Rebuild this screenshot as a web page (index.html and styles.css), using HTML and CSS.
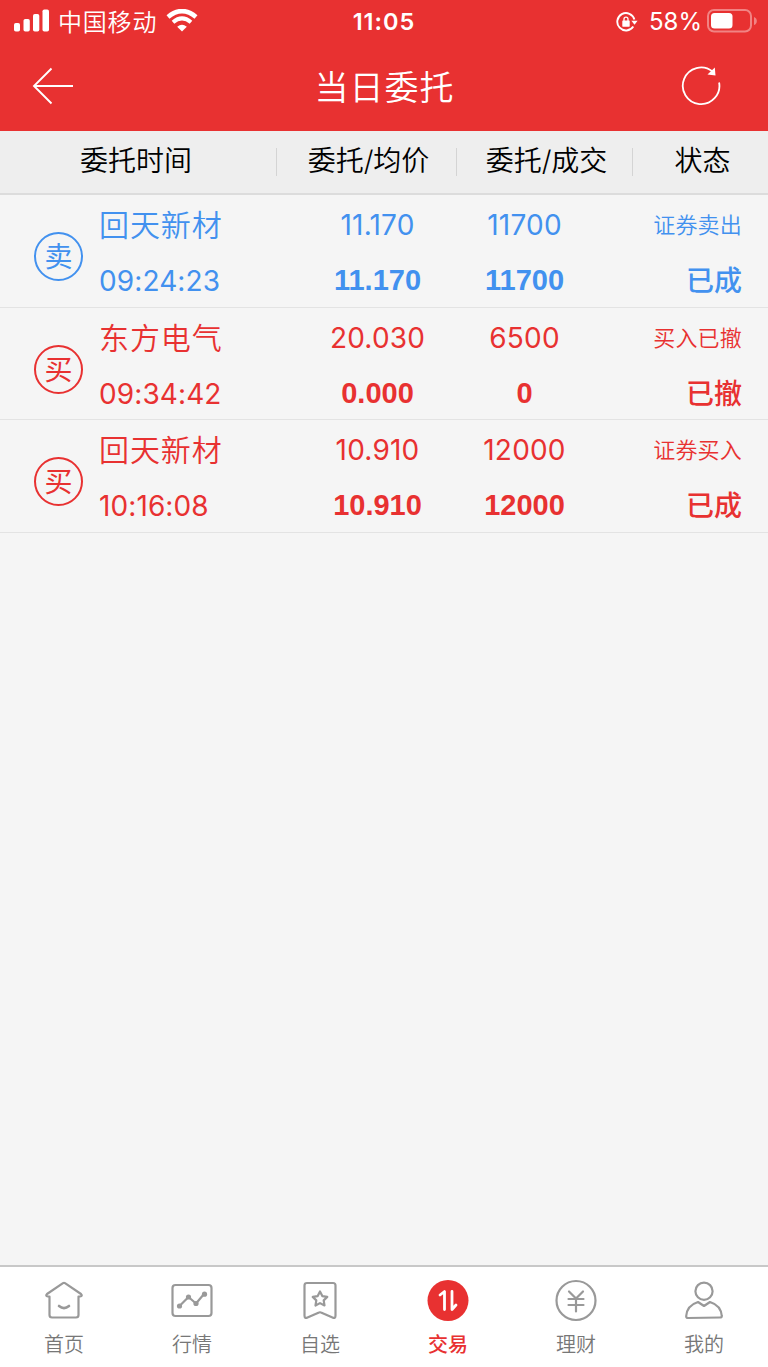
FILE: index.html
```html
<!DOCTYPE html>
<html lang="zh-CN">
<head>
<meta charset="UTF-8">
<meta name="viewport" content="width=device-width, initial-scale=1.0">
<title>当日委托</title>
<link rel="stylesheet" href="styles.css">
</head>
<body>

<div class="app">

<!-- Status bar + title -->
<header class="top">
    <div class="status-bar">
        <div class="status-left">
            <svg width="36" height="24" viewBox="0 0 36 24" fill="#fff">
                <rect x="0" y="14" width="6" height="8.500" rx="1.800"/>
                <rect x="9.500" y="10" width="6.300" height="12.500" rx="1.800"/>
                <rect x="19" y="5" width="6.300" height="17.500" rx="1.800"/>
                <rect x="28.500" y="0.500" width="6.500" height="22" rx="1.800"/>
            </svg>
            <span class="carrier">中国移动</span>
            <svg class="wifi" width="32" height="24" viewBox="0 0 32 24">
                <path d="M2 7.900Q16 -3.700 30 7.900" fill="none" stroke="#fff" stroke-width="4.600"/>
                <path d="M7 13.200Q16 5.500 25 13.200" fill="none" stroke="#fff" stroke-width="4"/>
                <path d="M11.200 17.800Q16 13.600 20.800 17.800L16 22.500Z" fill="#fff"/>
            </svg>
        </div>
        <div class="clock">11:05</div>
        <div class="status-right">
            <svg class="lock" width="22" height="20" viewBox="0 0 22 20">
                <path d="M17.300 14.500A8.700 8.700 0 1 1 18.400 7.500" fill="none" stroke="#fff" stroke-width="1.900"/>
                <path d="M15.400 8.800H21.600L18.500 12.800Z" fill="#fff"/>
                <rect x="6.300" y="8.500" width="7.400" height="6.200" rx="0.600" fill="#fff"/>
                <path d="M8 9V7.200a2 2 0 0 1 4 0V9" fill="none" stroke="#fff" stroke-width="1.300"/>
            </svg>
            <span class="percent">58%</span>
            <svg width="50" height="24" viewBox="0 0 50 24">
                <rect x="1" y="1" width="43" height="21.500" rx="6" fill="none" stroke="#fff" stroke-opacity="0.400" stroke-width="2"/>
                <rect x="4" y="4" width="21.500" height="15.500" rx="3.500" fill="#fff"/>
                <path d="M47 8Q49.800 9 49.800 12T47 16Z" fill="#fff" fill-opacity="0.400"/>
            </svg>
        </div>
    </div>
    <div class="nav">
        <svg width="42" height="38" viewBox="0 0 42 38" fill="none" stroke="#fff" stroke-width="1.900">
            <path d="M19.500 1.500L2 19L19.500 36.500M2 19H41"/>
        </svg>
        <h1>当日委托</h1>
        <svg width="40" height="40" viewBox="0 0 40 40">
            <path d="M38.100 16.500A18.300 18.300 0 1 1 31.500 5.500" fill="none" stroke="#fff" stroke-width="1.800"/>
            <path d="M33.800 1.500L34.500 9.500L26.500 8.500Z" fill="#fff"/>
        </svg>
    </div>
</header>

<!-- Orders -->
<div class="table-head">
    <span>委托时间</span>
    <span>委托/均价</span>
    <span>委托/成交</span>
    <span>状态</span>
</div>

<main class="orders">
    <div class="order sell">
        <div class="badge">卖</div>
        <div class="stock"><p>回天新材</p><p class="time">09:24:23</p></div>
        <div class="num"><p>11.170</p><b>11.170</b></div>
        <div class="num"><p>11700</p><b>11700</b></div>
        <div class="state"><p>证券卖出</p><b>已成</b></div>
    </div>
    <div class="order buy">
        <div class="badge">买</div>
        <div class="stock"><p>东方电气</p><p class="time">09:34:42</p></div>
        <div class="num"><p>20.030</p><b>0.000</b></div>
        <div class="num"><p>6500</p><b>0</b></div>
        <div class="state"><p>买入已撤</p><b>已撤</b></div>
    </div>
    <div class="order buy">
        <div class="badge">买</div>
        <div class="stock"><p>回天新材</p><p class="time">10:16:08</p></div>
        <div class="num"><p>10.910</p><b>10.910</b></div>
        <div class="num"><p>12000</p><b>12000</b></div>
        <div class="state"><p>证券买入</p><b>已成</b></div>
    </div>
</main>

<!-- Tab bar -->
<nav class="tabs">
    <a class="tab">
        <svg width="44" height="44" viewBox="0 0 44 44">
            <path d="M7.500 17.500V36Q7.500 38.500 10 38.500H34Q36.500 38.500 36.500 36V17.500H38Q41 17 39 15L23 4.200Q22 3.500 21 4.200L5 15Q3 17 6 17.500Z"/>
            <path d="M17 27Q22 31.200 27 27" stroke-width="2.600"/>
        </svg>
        <span>首页</span>
    </a>
    <a class="tab">
        <svg width="44" height="44" viewBox="0 0 44 44">
            <rect x="2.500" y="6" width="39" height="31" rx="3"/>
            <path d="M9.500 27L18.500 18L26 24.500L34 15"/>
            <g class="dots"><circle cx="9.500" cy="27" r="2.600"/><circle cx="18.500" cy="18" r="2.600"/><circle cx="26" cy="24.500" r="2.600"/><circle cx="34.500" cy="15.200" r="2.600"/></g>
        </svg>
        <span>行情</span>
    </a>
    <a class="tab">
        <svg width="44" height="44" viewBox="0 0 44 44">
            <path d="M9 4H35Q37.500 4 37.500 6.500V36.500Q37.500 40 34.500 38.500L23 33.500Q22 33 21 33.500L9.500 38.500Q6.500 40 6.500 36.500V6.500Q6.500 4 9 4Z"/>
            <path d="M22 12.500L24.300 17.100L29.300 17.900L25.700 21.400L26.500 26.500L22 24.100L17.500 26.500L18.300 21.400L14.700 17.900L19.700 17.100Z"/>
        </svg>
        <span>自选</span>
    </a>
    <a class="tab active">
        <svg width="44" height="44" viewBox="0 0 44 44">
            <circle cx="22" cy="21.500" r="20.500"/>
            <path d="M14 16L18.500 12.500V30.500M26 12.500V30.500L30 26"/>
        </svg>
        <span>交易</span>
    </a>
    <a class="tab">
        <svg width="44" height="44" viewBox="0 0 44 44">
            <circle cx="22" cy="21.500" r="19.500"/>
            <path d="M15 12.500L22 19.500L29 12.500M14.500 20H29.500M14.500 26H29.500M22 19.500V32.500"/>
        </svg>
        <span>理财</span>
    </a>
    <a class="tab">
        <svg width="44" height="44" viewBox="0 0 44 44">
            <circle cx="22" cy="12.200" r="8.600"/>
            <path d="M16 23L22 27L28 23Q39 26.500 39.800 37Q40 38.500 38 38.500L6 39Q4 39 4.200 37Q5 26.500 16 23Z"/>
        </svg>
        <span>我的</span>
    </a>
</nav>

</div>

</body>
</html>
```
FILE: styles.css
```css
* {
box-sizing: border-box;
}
body {
margin: 0;
background-color: #f5f5f5;
font-family: Inter, "Noto Sans CJK SC", sans-serif;
font-weight: 350;
}
p, h1 {
margin: 0;
}
svg {
display: block;
flex: none;
}
.app {
display: flex;
flex-direction: column;
height: 1367px;
}
.top {
height: 131px;
background-color: #e83131;
color: #fff;
}
.status-bar {
display: grid;
grid-template-columns: 1fr auto 1fr;
grid-template-rows: 42px;
align-items: center;
height: 42px;
padding: 0 11px 0 14px;
line-height: 42px;
}
.status-left, .status-right {
display: flex;
align-items: center;
}
.carrier {
padding-top: 3px;
margin-left: 8px;
font-size: 24px;
letter-spacing: 0.8px;
}
.wifi {
margin-left: 9px;
}
.clock {
padding-top: 2px;
margin-right: 3px;
font-size: 23.5px;
font-weight: 600;
letter-spacing: 1px;
}
.status-right {
justify-content: flex-end;
}
.lock {
margin-top: 2px;
}
.percent {
padding-top: 2px;
margin: 0 5px 0 11px;
font-size: 24px;
font-weight: 400;
}
.nav {
display: flex;
justify-content: space-between;
align-items: center;
height: 88px;
padding: 0 47px 0 32px;
}
h1 {
margin: -1px 0 0 14px;
font-size: 34px;
font-weight: 350;
letter-spacing: 1px;
}
.table-head {
display: grid;
grid-template-columns: 276px 180px 176px 136px;
height: 64px;
background-color: #eee;
border-bottom: 2px solid #dcdcdc;
font-size: 28px;
line-height: 60px;
text-align: center;
color: #000;
}
.table-head span {
padding-left: 5px;
background: linear-gradient(#d4d4d4, #d4d4d4) 0 17px / 1px 28px no-repeat;
}
.table-head span:first-child {
padding: 0 4px 0 0;
background: none;
}
.orders {
flex: 1;
}
.order {
display: grid;
grid-template-columns: 65px 205px 147px 147px 1fr;
height: 112.6px;
padding: 2px 26px 0 34px;
border-bottom: 1px solid #e3e3e3;
line-height: 56px;
}
.sell {
color: #4291ef;
}
.buy {
color: #e83131;
}
.badge {
width: 49px;
height: 49px;
margin-top: 35px;
border: 2px solid;
border-radius: 50%;
font-size: 28px;
font-weight: 400;
line-height: 47px;
text-align: center;
}
.stock {
font-size: 30px;
}
.stock p {
height: 56px;
letter-spacing: 0.9px;
}
.stock .time {
font-size: 28px;
font-weight: 400;
letter-spacing: 0.1px;
}
.num {
font-size: 28px;
text-align: center;
}
.num p {
font-weight: 400;
letter-spacing: 0.2px;
}
.num b {
display: block;
margin-top: -1px;
font-family: "Liberation Sans", sans-serif;
font-size: 29px;
font-weight: 700;
}
.state {
font-size: 22px;
text-align: right;
}
.state p {
letter-spacing: 0.2px;
}
.state b {
display: block;
font-size: 28px;
font-weight: 500;
}
.tabs {
display: grid;
grid-template-columns: repeat(6, 1fr);
height: 102px;
background-color: #fff;
border-top: 2px solid #c8c8c8;
}
.tab {
display: flex;
flex-direction: column;
align-items: center;
padding-top: 12px;
font-size: 20px;
line-height: 44px;
color: #777;
}
.tab svg {
fill: none;
stroke: #999;
stroke-width: 2.2;
stroke-linecap: round;
stroke-linejoin: round;
}
.tab .dots {
fill: #999;
stroke: none;
}
.active {
color: #e83131;
font-weight: 500;
}
.active svg {
stroke: #fff;
stroke-width: 2.8;
}
.active circle {
fill: #e83131;
stroke: none;
}
```
